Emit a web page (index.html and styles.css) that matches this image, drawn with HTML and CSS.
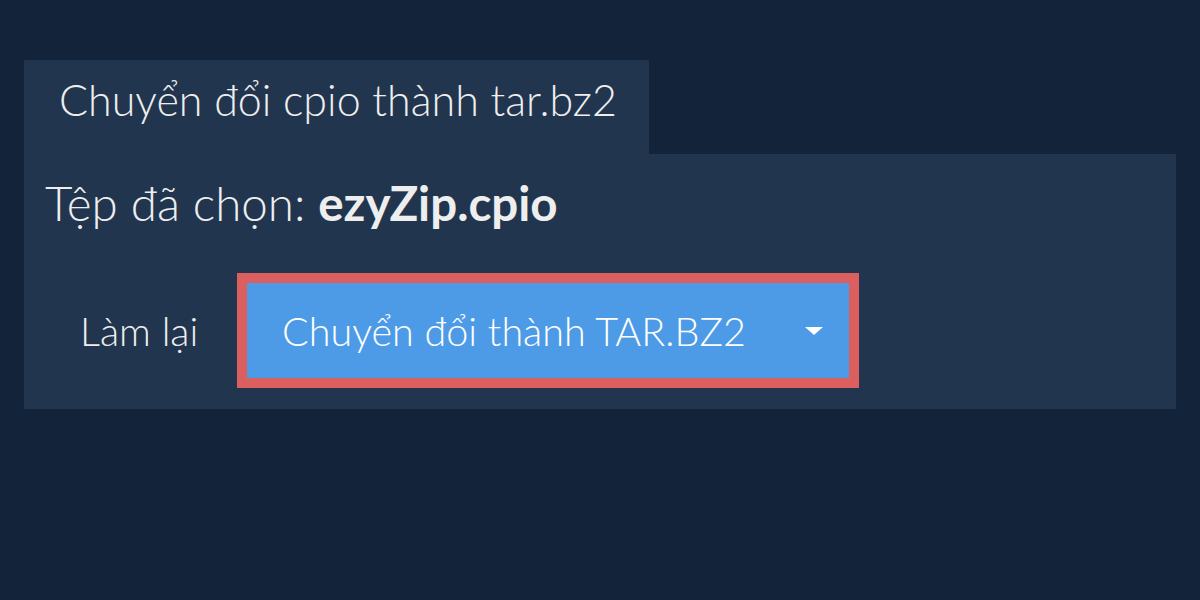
FILE: index.html
```html
<!DOCTYPE html>
<html lang="vi">
<head>
    <meta charset="UTF-8">
    <meta name="viewport" content="width=device-width, initial-scale=1.0">
    <title>Chuyển đổi cpio thành tar.bz2</title>
    <link rel="stylesheet" href="styles.css">
</head>
<body>
    <div class="converter">
        <div class="tab">Chuyển đổi cpio thành tar.bz2</div>
        <div class="panel">
            <p class="selected">Tệp đã chọn: <strong>ezyZip.cpio</strong></p>
            <div class="actions">
                <button class="reset">Làm lại</button>
                <div class="convert-wrap">
                    <button class="convert">
                        <span>Chuyển đổi thành TAR.BZ2</span>
                        <span class="caret"></span>
                    </button>
                </div>
            </div>
        </div>
    </div>
</body>
</html>
```

FILE: styles.css
```css
body {
    margin: 0;
    padding: 60px 24px;
    background-color: #12233a;
    color: #eeeeee;
    font-family: "Lato Light", Lato, "Liberation Sans", sans-serif;
    font-weight: 300;
}
.tab {
    display: inline-block;
    vertical-align: top;
    white-space: nowrap;
    background-color: #21354f;
    font-size: 43px;
    line-height: 52px;
    padding: 14px 35px 0 35px;
    height: 94px;
    box-sizing: border-box;
    width: 625px;
}
.panel {
    background-color: #21354f;
    padding: 20px 21px 21px 21px;
    height: 255px;
    box-sizing: border-box;
}
.selected {
    margin: 0;
    font-size: 47.5px;
    line-height: 58px;
    white-space: nowrap;
}
.selected strong {
    font-family: Lato, "Liberation Sans", sans-serif;
    font-weight: 700;
}
.actions {
    display: flex;
    align-items: center;
    margin-top: 41px;
}
.reset {
    background: none;
    border: none;
    color: #eeeeee;
    font-family: inherit;
    font-weight: 300;
    font-size: 39.5px;
    padding: 0 0 0 35px;
    width: 192px;
    text-align: left;
    white-space: nowrap;
}
.convert-wrap {
    border: 10px solid #dc5f5f;
}
.convert {
    display: flex;
    align-items: center;
    justify-content: space-between;
    width: 602px;
    height: 95px;
    background-color: #4d9be6;
    border: none;
    color: #ffffff;
    font-family: inherit;
    font-weight: 300;
    font-size: 39.5px;
    padding: 0 26px 0 35px;
    white-space: nowrap;
}
.caret {
    width: 0;
    height: 0;
    border-left: 9px solid transparent;
    border-right: 9px solid transparent;
    border-top: 8px solid #ffffff;
}
```
